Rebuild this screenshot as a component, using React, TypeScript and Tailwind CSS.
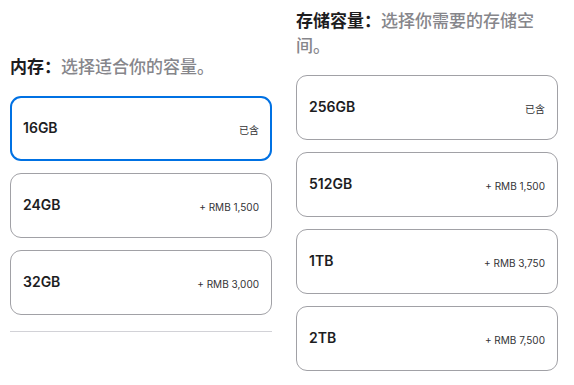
import React from "react";

type Option = {
  label: string;
  price: string;
  selected?: boolean;
};

const memory: Option[] = [
  { label: "16GB", price: "已含", selected: true },
  { label: "24GB", price: "+ RMB 1,500" },
  { label: "32GB", price: "+ RMB 3,000" },
];

const storage: Option[] = [
  { label: "256GB", price: "已含" },
  { label: "512GB", price: "+ RMB 1,500" },
  { label: "1TB", price: "+ RMB 3,750" },
  { label: "2TB", price: "+ RMB 7,500" },
];

function OptionCard({ option }: { option: Option }) {
  return (
    <button
      type="button"
      className={`flex h-[65px] w-full items-center justify-between rounded-[11px] bg-white px-3 text-left ${
        option.selected
          ? "border-2 border-[#0071e3] px-[11px]"
          : "border border-[#a1a1a6]"
      }`}
    >
      <span className="-mt-[3px] text-[14px] font-semibold text-[#1d1d1f]">
        {option.label}
      </span>
      <span className="mt-[3px] text-[10px] text-[#333336]">{option.price}</span>
    </button>
  );
}

function Section({
  title,
  subtitle,
  options,
  className,
}: {
  title: string;
  subtitle: string;
  options: Option[];
  className?: string;
}) {
  return (
    <div className={`flex w-[262px] flex-col ${className ?? ""}`}>
      <h2 className="mb-[16px] w-[250px] text-[17px] leading-[25px]">
        <span className="font-semibold text-[#1d1d1f]">{title}</span>
        <span className="font-medium text-[#86868b]">{subtitle}</span>
      </h2>
      <div className="flex flex-col gap-3">
        {options.map((o) => (
          <OptionCard key={o.label} option={o} />
        ))}
      </div>
    </div>
  );
}

export default function App() {
  return (
    <div
      className="flex h-[385px] w-[574px] gap-6 overflow-hidden bg-white px-[10px]"
      style={{ fontFamily: 'Inter, "Noto Sans CJK SC", sans-serif' }}
    >
      <div className="flex flex-col">
        <Section
          title="内存："
          subtitle="选择适合你的容量。"
          options={memory}
          className="pt-[55px]"
        />
        <div className="mt-4 h-px w-[262px] bg-[#d2d2d7]" />
      </div>
      <Section
        title="存储容量："
        subtitle="选择你需要的存储空间。"
        options={storage}
        className="pt-[9px]"
      />
    </div>
  );
}
